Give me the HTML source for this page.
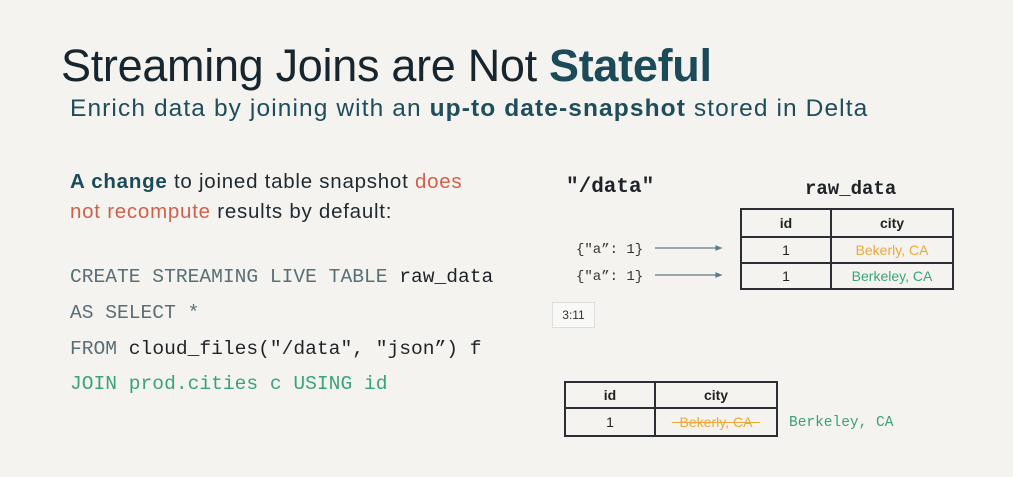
<!DOCTYPE html>
<html><head><style>
body{margin:0;width:1013px;height:477px;background:#f4f3ef;position:relative;overflow:hidden;font-family:"Liberation Sans",sans-serif}
.a{position:absolute;white-space:nowrap}
.m{font-family:"Liberation Mono",monospace}
table{position:absolute;border-collapse:collapse;font-size:14px;color:#222}
td{border:2px solid #2b2f33;text-align:center;padding:0}
</style></head><body>
<div class="a" style="left:61px;top:40px;font-size:45px;color:#17262e;letter-spacing:-0.3px">Streaming Joins are Not <b style="color:#1b4a58">Stateful</b></div>
<div class="a" style="left:70px;top:95px;font-size:24.5px;color:#1e4d5b;letter-spacing:1.1px">Enrich data by joining with an <b>up-to date-snapshot</b> stored in Delta</div>
<div class="a" style="left:70px;top:167px;font-size:20.5px;color:#1f2a30;line-height:30px;letter-spacing:0.75px"><b style="color:#1b4a58">A change</b> to joined table snapshot <span style="color:#d0604c">does</span><br><span style="color:#d0604c">not recompute</span> results by default:</div>
<div class="a m" style="left:70px;top:260px;font-size:19.6px;line-height:35.8px;color:#5a6e76">CREATE STREAMING LIVE TABLE <span style="color:#1f2328">raw_data</span><br>AS SELECT *<br>FROM <span style="color:#1f2328">cloud_files("/data", "json”) f</span><br><span style="color:#3aa37a">JOIN prod.cities c USING id</span></div>
<div class="a m" style="left:566px;top:176px;font-size:21px;font-weight:bold;color:#1f2328">"/data"</div>
<div class="a m" style="left:805px;top:178px;font-size:19px;font-weight:bold;color:#1f2328">raw_data</div>
<div class="a m" style="left:576px;top:237px;font-size:14px;color:#333;line-height:27px">{"a”: 1}<br>{"a”: 1}</div>
<svg class="a" style="left:650px;top:240px" width="80" height="40"><g stroke="#5a7f8a" stroke-width="1.2" fill="#5a7f8a"><line x1="5" y1="8" x2="68" y2="8"/><path d="M66 6L71 8L66 10Z"/><line x1="5" y1="35" x2="68" y2="35"/><path d="M66 33L71 35L66 37Z"/></g></svg>
<table style="left:740px;top:208px;width:214px"><tr style="height:28px"><td style="width:88px"><b>id</b></td><td><b>city</b></td></tr><tr style="height:26px"><td>1</td><td style="color:#e8a93a">Bekerly, CA</td></tr><tr style="height:26px"><td>1</td><td style="color:#3aa37a">Berkeley, CA</td></tr></table>
<div class="a" style="left:552px;top:302px;width:41px;height:24px;border:1px solid #ddd;background:#f8f8f6;font-size:12px;color:#333;text-align:center;line-height:24px">3:11</div>
<table style="left:564px;top:381px;width:214px"><tr style="height:26px"><td style="width:88px"><b>id</b></td><td><b>city</b></td></tr><tr style="height:28px"><td>1</td><td style="color:#e8a93a;text-decoration:line-through">&nbsp;&nbsp;Bekerly, CA&nbsp;&nbsp;</td></tr></table>
<div class="a m" style="left:789px;top:415px;font-size:14.5px;color:#3a9f7a">Berkeley, CA</div>
</body></html>
